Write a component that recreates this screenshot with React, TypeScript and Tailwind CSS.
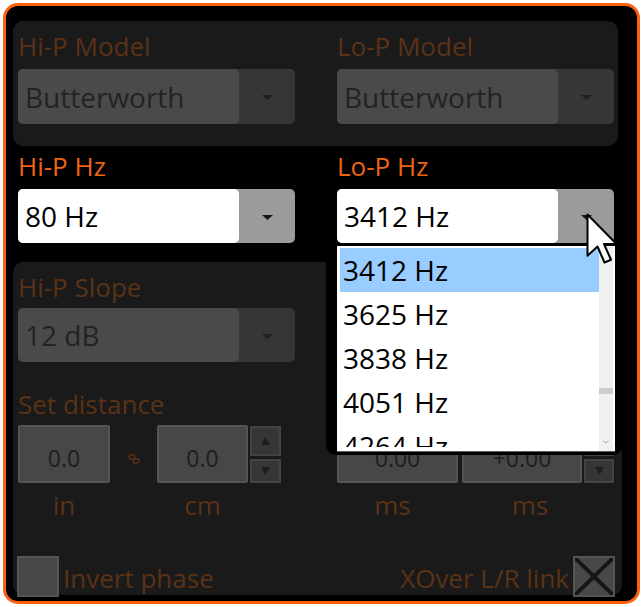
import React from 'react';

// dim label colour for the disabled parts of the panel
const dim = 'text-[#5a3216]';

function Tri({ color = '#222', up = false, w = 11, h = 5 }: { color?: string; up?: boolean; w?: number; h?: number }) {
  return (
    <svg width={w} height={h} viewBox={`0 0 ${w} ${h}`}>
      <path d={up ? `M0 ${h} L${w / 2} 0 L${w} ${h} Z` : `M0 0 L${w} 0 L${w / 2} ${h} Z`} fill={color} />
    </svg>
  );
}

function Dropdown({ value, active = false, className = '' }: { value: string; active?: boolean; className?: string }) {
  return (
    <div className={`flex w-[277px] rounded-[5px] ${active ? 'bg-[#9b9b9b]' : 'bg-[#363636]'} ${className}`}>
      <div
        className={`flex w-[221px] items-center rounded-[5px] pl-[7px] text-[28px] ${
          active ? 'bg-white text-black' : 'bg-[#4a4a4a] text-[#232323]'
        }`}
      >
        {value}
      </div>
      <div className="flex flex-1 items-center justify-center pt-[2px]">
        <Tri color={active ? '#161616' : '#202020'} />
      </div>
    </div>
  );
}

function NumBox({ value, className = '' }: { value: string; className?: string }) {
  return (
    <div
      className={`flex h-[58px] items-center justify-center rounded-[2px] border-2 border-[#545454] bg-[#474747] pt-[8px] text-[23px] text-[#1e1e1e] ${className}`}
    >
      {value}
    </div>
  );
}

function Spin({ className = '' }: { className?: string }) {
  return (
    <div className={`mt-[1px] flex flex-col gap-[3px] ${className}`}>
      <div className="flex h-[30px] items-center justify-center border-2 border-[#434343] bg-[#363636]">
        <Tri up w={9} h={8} color="#1e1e1e" />
      </div>
      <div className="flex h-[24px] items-center justify-center border-2 border-[#434343] bg-[#363636]">
        <Tri w={9} h={8} color="#1e1e1e" />
      </div>
    </div>
  );
}

function LinkIcon() {
  return (
    <svg width="12" height="10" viewBox="0 0 12 10" fill="none" stroke="#5a3216" strokeWidth="1.3">
      <rect x="1" y="1" width="6" height="4" rx="2" />
      <rect x="5" y="5" width="6" height="4" rx="2" />
    </svg>
  );
}

export default function App() {
  const items = ['3412 Hz', '3625 Hz', '3838 Hz', '4051 Hz', '4264 Hz'];

  return (
    <div className="relative h-[607px] w-[643px] overflow-hidden bg-white p-[3px] font-['Open_Sans',sans-serif]">
      <div className="h-full rounded-[15px] border-[3px] border-[#ff6010] bg-black px-[7px] pt-[15px]">
        {/* Filter models (disabled) */}
        <div className="h-[125px] w-[605px] rounded-[10px] bg-[#1a1a1a] pl-[5px] pt-[8px]">
          <div className="grid grid-cols-[277px_277px] gap-x-[42px]">
            <div>
              <div className={`h-[34px] text-[26px] leading-[34px] ${dim}`}>Hi-P Model</div>
              <Dropdown value="Butterworth" className="mt-[6px] h-[55px]" />
            </div>
            <div>
              <div className={`h-[34px] text-[26px] leading-[34px] ${dim}`}>Lo-P Model</div>
              <Dropdown value="Butterworth" className="mt-[6px] h-[55px]" />
            </div>
          </div>
        </div>

        {/* Frequencies */}
        <div className="mt-[3px] grid grid-cols-[277px_277px] gap-x-[42px] pl-[5px]">
          <div>
            <div className="h-[34px] text-[26px] leading-[34px] text-[#ea6514]">Hi-P Hz</div>
            <Dropdown value="80 Hz" active className="mt-[6px] h-[54px]" />
          </div>
          <div>
            <div className="h-[34px] text-[26px] leading-[34px] text-[#ea6514]">Lo-P Hz</div>
            <Dropdown value="3412 Hz" active className="mt-[6px] h-[54px]" />
          </div>
        </div>

        {/* Slope / distance / delay (disabled) */}
        <div className="mt-[19px] h-[333px] w-[609px] rounded-[10px] bg-[#1a1a1a] pt-[8px]">
          <div className="grid grid-cols-[277px_277px] gap-x-[42px] pl-[5px]">
            <div>
              <div className={`h-[34px] text-[26px] leading-[34px] ${dim}`}>Hi-P Slope</div>
              <Dropdown value="12 dB" className="mt-[4px] h-[54px]" />
              <div className={`mt-[25px] h-[34px] text-[26px] leading-[34px] ${dim}`}>Set distance</div>
              <div className="mt-[4px] flex">
                <NumBox value="0.0" className="w-[92px]" />
                <div className="flex w-[47px] items-center justify-center pt-[9px]">
                  <LinkIcon />
                </div>
                <NumBox value="0.0" className="w-[91px]" />
                <Spin className="ml-[2px] w-[31px]" />
              </div>
              <div className={`mt-[5px] flex h-[34px] text-[26px] leading-[34px] ${dim}`}>
                <div className="w-[92px] text-center">in</div>
                <div className="ml-[47px] w-[91px] text-center">cm</div>
              </div>
            </div>
            <div>
              {/* upper part of this column lies under the open list */}
              <div className="h-[155px]" />
              <div className="flex">
                <NumBox value="0.00" className="w-[121px]" />
                <NumBox value="+0.00" className="ml-[4px] w-[120px]" />
                <Spin className="ml-[2px] w-[30px]" />
              </div>
              <div className={`mt-[5px] flex h-[34px] text-[26px] leading-[34px] ${dim}`}>
                <div className="w-[111px] text-center">ms</div>
                <div className="ml-[14px] w-[136px] text-center">ms</div>
              </div>
            </div>
          </div>

          <div className="mt-[34px] flex h-[41px] items-center justify-between pl-[4px] pr-[7px]">
            <div className="flex items-center">
              <div className="h-[41px] w-[42px] border-2 border-[#555] bg-[#484848]" />
              <span className={`ml-[4px] pt-[3px] text-[26px] leading-[34px] ${dim}`}>Invert phase</span>
            </div>
            <div className="flex items-center">
              <span className={`mr-[4px] pt-[3px] text-[26px] leading-[34px] ${dim}`}>XOver L/R link</span>
              <div className="relative h-[41px] w-[42px] border-2 border-[#555] bg-[#484848]">
                <svg className="absolute inset-0" width="38" height="37" viewBox="0 0 38 37">
                  <path d="M0 0 L38 37 M38 0 L0 37" stroke="#161616" strokeWidth="4" />
                </svg>
              </div>
            </div>
          </div>
        </div>
      </div>

      {/* Open drop-down list of Lo-P Hz, with its shadow */}
      <div className="absolute left-[326px] top-[246px] h-[209px] w-[297px] rounded-[10px] bg-black" />
      <div className="absolute left-[337px] top-[246px] flex h-[206px] w-[278px] border-b border-[#5a5a5a] bg-white pl-[3px] pt-[2px]">
        <div className="h-[199px] w-[259px] overflow-hidden">
          {items.map((it, i) => (
            <div
              key={it}
              className={`flex h-[44px] items-center pl-[3px] text-[28px] text-black ${i === 0 ? 'bg-[#99ccff]' : ''}`}
            >
              {it}
            </div>
          ))}
        </div>
        <div className="relative -mt-[1px] h-[204px] w-[14px] bg-[#f0f0f0]">
          <div className="absolute left-0 top-[141px] h-[6px] w-full bg-[#cdcdcd]" />
          <svg className="absolute left-[4px] top-[193px]" width="6" height="4" viewBox="0 0 6 4">
            <path d="M0.5 0.5 L3 3 L5.5 0.5" fill="none" stroke="#a8a8a8" strokeWidth="1" />
          </svg>
        </div>
      </div>

      {/* Mouse pointer */}
      <svg className="absolute left-[586px] top-[213px]" width="33" height="52" viewBox="-0.6 -0.6 13.2 20.8">
        <path
          d="M0 0 L0 16.5 L4 12.8 L6.8 19.2 L9.4 18.1 L6.6 11.8 L11.6 11.8 Z"
          fill="white"
          stroke="black"
          strokeWidth="0.8"
          strokeLinejoin="round"
        />
      </svg>
    </div>
  );
}
